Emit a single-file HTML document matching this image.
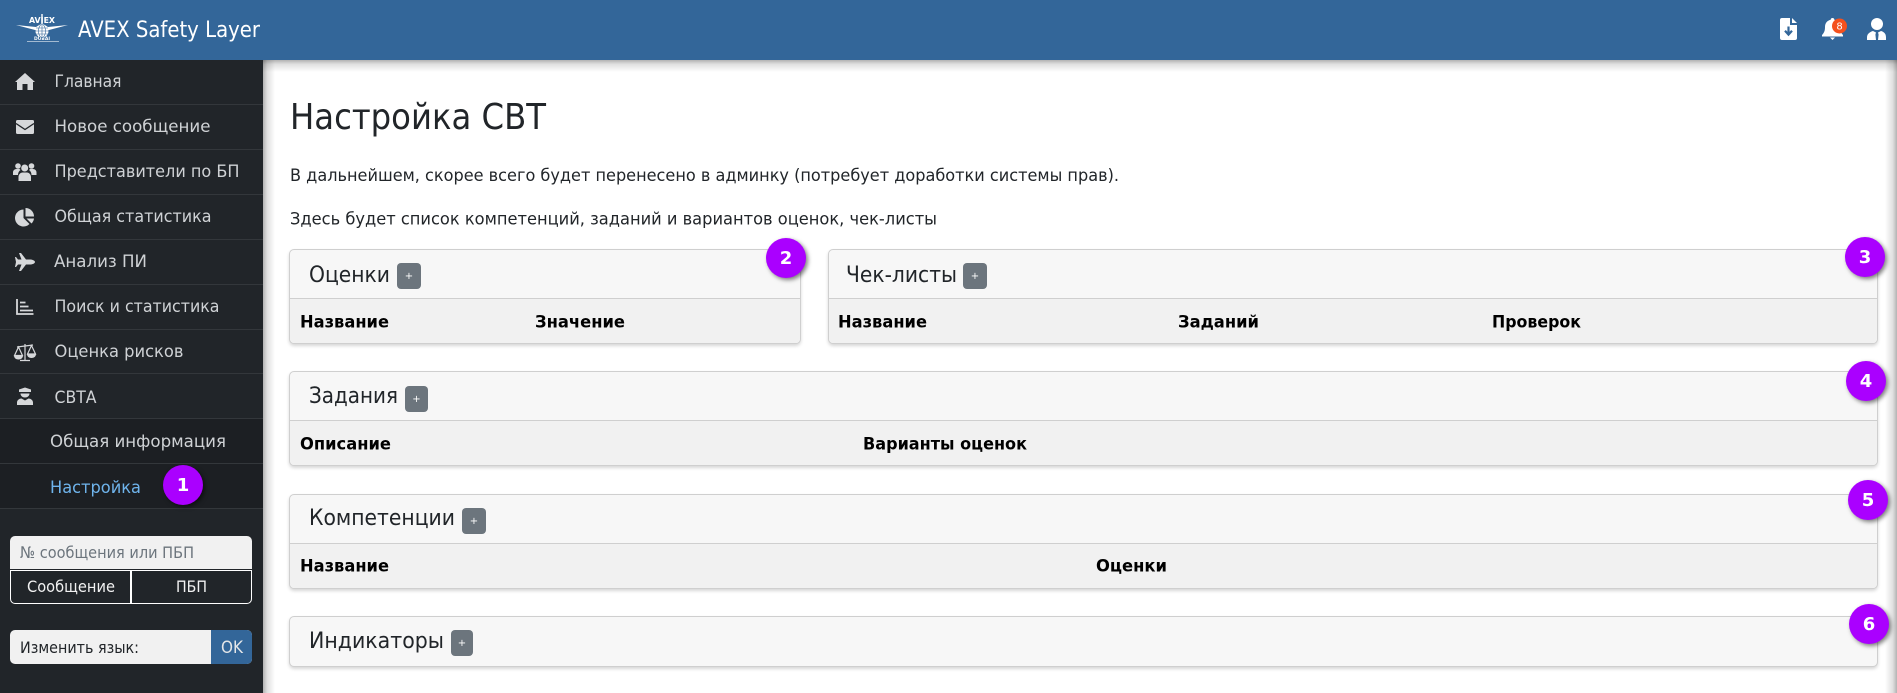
<!DOCTYPE html>
<html lang="ru">
<head>
<meta charset="utf-8">
<title>Настройка СВТ</title>
<style>
html,body{margin:0;padding:0;width:1897px;height:693px;overflow:hidden;background:#fff}
#wrap{position:absolute;left:0;top:0;width:1897px;height:693px;overflow:hidden}
.b{position:absolute;box-sizing:border-box}
#sh-t{left:263px;top:60px;width:1634px;height:12px;background:linear-gradient(to bottom,rgba(0,0,0,.3),rgba(0,0,0,.12) 35%,rgba(0,0,0,0))}
#sh-l{left:263px;top:60px;width:12px;height:633px;background:linear-gradient(to right,rgba(0,0,0,.3),rgba(0,0,0,.12) 35%,rgba(0,0,0,0))}
#sh-r{left:1885px;top:60px;width:12px;height:633px;background:linear-gradient(to left,rgba(0,0,0,.3),rgba(0,0,0,.12) 35%,rgba(0,0,0,0))}
#top{left:0;top:0;width:1897px;height:60px;background:#336699}
#side{left:0;top:60px;width:263px;height:633px;background:#212529}
#sub{left:0;top:358px;width:263px;height:90px;background:#1c1f23;position:absolute}
.ln{position:absolute;left:0;width:263px;height:1px;background:#33373b}
.card{border:1px solid #cfcfcf;border-radius:5px;background:#f7f7f7;box-shadow:0 2px 3px rgba(0,0,0,.16);overflow:hidden}
.th{position:absolute;left:0;right:0;height:46px;top:48px;background:#f1f1f1;border-top:1px solid #cfcfcf}
.pl{background:#6c757d;border-radius:4px;height:26px}
.bd{width:40px;height:40px;border-radius:50%;background:#aa00ff;box-shadow:2px 2px 4px rgba(0,0,0,.5)}
svg{position:absolute;left:0;top:0;display:block}
text{font-family:"DejaVu Sans","Liberation Sans",sans-serif}
.m{font-size:17px;fill:#cfd2d5}
.h{font-size:22px;fill:#212529}
.p{font-size:17px;fill:#212529}
.k{font-size:17px;font-weight:700;fill:#000}
.n{font-size:18px;font-weight:700;fill:#fff;text-anchor:middle}
.s{font-size:10px;fill:#fff;text-anchor:middle}
</style>
</head>
<body>
<div id="wrap">
<div class="b" id="sh-t"></div>
<div class="b" id="sh-l"></div>
<div class="b" id="sh-r"></div>
<div class="b" id="side">
  <div id="sub"></div>
  <div class="ln" style="top:44px"></div><div class="ln" style="top:89px"></div><div class="ln" style="top:134px"></div><div class="ln" style="top:179px"></div><div class="ln" style="top:224px"></div><div class="ln" style="top:269px"></div><div class="ln" style="top:313px"></div><div class="ln" style="top:358px"></div><div class="ln" style="top:403px"></div><div class="ln" style="top:448px"></div>
</div>
<div class="b" id="top"></div>

<div class="b" style="left:10px;top:536px;width:242px;height:33px;background:#f1f1f1;border-radius:5px 5px 0 0"></div>
<div class="b" style="left:10px;top:570px;width:242px;height:34px;border:1px solid #fff;border-top:1px solid #fff;border-radius:0 0 5px 5px"></div>
<div class="b" style="left:130px;top:570px;width:2px;height:34px;background:#fff"></div>
<div class="b" style="left:10px;top:630px;width:242px;height:34px;background:#f1f1f1;border-radius:5px"></div>
<div class="b" style="left:211px;top:630px;width:41px;height:34px;background:#336699;border-radius:0 5px 5px 0"></div>

<div class="b card" style="left:289px;top:249px;width:512px;height:95px"><div class="th"></div></div>
<div class="b card" style="left:828px;top:249px;width:1050px;height:95px"><div class="th"></div></div>
<div class="b card" style="left:289px;top:371px;width:1589px;height:95px"><div class="th"></div></div>
<div class="b card" style="left:289px;top:494px;width:1589px;height:95px"><div class="th"></div></div>
<div class="b card" style="left:289px;top:616px;width:1589px;height:51px"></div>

<div class="b pl" style="left:397px;top:263px;width:24px"></div>
<div class="b pl" style="left:963px;top:263px;width:24px"></div>
<div class="b pl" style="left:405px;top:386px;width:23px"></div>
<div class="b pl" style="left:462px;top:508px;width:24px"></div>
<div class="b pl" style="left:451px;top:630px;width:22px"></div>

<div class="b bd" style="left:163px;top:465px"></div>
<div class="b bd" style="left:766px;top:238px"></div>
<div class="b bd" style="left:1845px;top:237px"></div>
<div class="b bd" style="left:1846px;top:361px"></div>
<div class="b bd" style="left:1848px;top:480px"></div>
<div class="b bd" style="left:1849px;top:604px"></div>

<svg width="1897" height="693" viewBox="0 0 1897 693" xmlns="http://www.w3.org/2000/svg">
  <!-- logo -->
  <g fill="#fff">
    <path d="M16 25 L36 27 L41 24 L43 24 L48 27 L68 25 L49 30 L35 30Z"/>
    <circle cx="42" cy="31" r="6.500"/>
    <path d="M41.300 14 H42.700 V24 H41.300Z"/>
    <text x="29" y="23" font-size="7.500" font-weight="700" textLength="26" lengthAdjust="spacingAndGlyphs">AVIEX</text>
    <text x="34" y="40" font-size="4.500" font-weight="700" textLength="16" lengthAdjust="spacingAndGlyphs">DUBAI</text>
    <rect x="27" y="41" width="32" height="1" opacity=".55"/>
  </g>
  <g stroke="#336699" stroke-width=".6" fill="none"><path d="M35.500 31H48.500M36 28H48M36 34H48M42 24.500V37.500"/><ellipse cx="42" cy="31" rx="3.500" ry="6.500"/></g>
  <text x="78" y="37" font-size="22" fill="#fff" textLength="182" lengthAdjust="spacingAndGlyphs">AVEX Safety Layer</text>

  <!-- top icons -->
  <path fill="#fff" d="M1782 18H1790V25H1797V38a2 2 0 0 1-2 2H1782a2 2 0 0 1-2-2V20a2 2 0 0 1 2-2ZM1792 18L1797 23H1792Z"/>
  <path fill="none" stroke="#336699" stroke-width="2.200" d="M1788.500 26.500V34M1785 30.800L1788.500 34.600L1792 30.800"/>
  <g transform="translate(1 0)">
  <path fill="#fff" d="M1831.500 18a1.800 1.800 0 0 1 1.800 1.800c3.600.8 5.700 3.600 5.700 7.200 0 4 1 5.800 3 8v1.500h-21v-1.500c2-2.200 3-4 3-8 0-3.600 2.100-6.400 5.700-7.200a1.800 1.800 0 0 1 1.800-1.800ZM1829 37.500h5l-2.500 2.500Z"/>
  <circle cx="1838.500" cy="26" r="7.500" fill="#f4511e"/>
  <text x="1838.500" y="29.500" class="s">8</text>
  </g>
  <circle cx="1877" cy="24" r="6" fill="#fff"/>
  <path fill="#fff" d="M1867 40v-2.500c0-3.500 2.500-5.500 6-6.500L1877 33l4-2c3.500 1 5 3 5 6.500v2.500Z"/>
  <path fill="#336699" d="M1876 32.500h2l.6 2-.6 5.500h-2l-.6-5.500Z"/>

  <!-- menu icons -->
  <g fill="#d6d8da">
    <path d="M25 73L35 82H33V90H27.500V84H22.500V90H17V82H15Z"/>
    <path d="M17.500 120H32.500A1.500 1.500 0 0 1 34 121.500V132.500A1.500 1.500 0 0 1 32.500 134H17.500A1.500 1.500 0 0 1 16 132.500V121.500A1.500 1.500 0 0 1 17.500 120Z"/>
    <circle cx="18" cy="166" r="2.800"/><circle cx="31.500" cy="166" r="2.800"/><circle cx="24.700" cy="168" r="3.500"/>
    <path d="M13 175v-2.500c0-2 1.500-3.500 3.500-3.500h3l1 1c-1.500 1-2.500 2.800-2.500 5ZM36.500 175v-2.500c0-2-1.500-3.500-3.500-3.500h-3l-1 1c1.500 1 2.500 2.800 2.500 5ZM18.500 181v-4c0-2.500 2-4.500 4-4.500h4.500c2 0 4 2 4 4.500v4Z"/>
    <path d="M23.500 209.500V218L29.500 224A8.500 8.500 0 1 1 23.500 209.500Z"/>
    <path d="M25.500 208A8.500 8.500 0 0 1 34 216.500H25.500Z"/>
    <path d="M26.500 218.500H34A8.500 8.500 0 0 1 31.500 223.500Z"/>
    <path d="M35 262C35 260.500 32 259.500 30 259.500H26L21 253H19L21.500 259.500H18L16 257H15L16 262L15 267H16L18 264.500H21.500L19 271H21L26 264.500H30C32 264.500 35 263.500 35 262Z"/>
    <path d="M19 389.500L25 387.500L31 389.500V392H19ZM20.500 393.500H29.500C29.500 395.800 27.500 397.500 25 397.500S20.500 395.800 20.500 393.500ZM17 405V402.500C17 400 19.500 398.500 21.500 398.500L25 400.500L28.500 398.500C30.500 398.500 33 400 33 402.500V405Z"/>
  </g>
  <path fill="none" stroke="#212529" stroke-width="1.300" d="M16 123.500L25 129.500L34 123.500"/>
  <path fill="none" stroke="#d6d8da" stroke-width="1.800" d="M17 299V314H33.500M20 302.500H25.500M20 306.500H28.500M20 310.500H33"/>
  <g fill="none" stroke="#d6d8da" stroke-width="1.200"><path d="M25 344V360M20 360.500H30M17 347L33 345"/><path d="M18.500 347L14.500 355.500H22.500ZM31.500 345.500L27.500 354H35.500Z"/></g>
  <path fill="#d6d8da" d="M14 355.500H23C23 358 21 359.500 18.500 359.500S14 358 14 355.500ZM27 354H36C36 356.500 34 358 31.500 358S27 356.500 27 354Z"/>

  <!-- menu text -->
  <text class="m" x="54.500" y="87" textLength="67" lengthAdjust="spacingAndGlyphs">Главная</text>
  <text class="m" x="54.500" y="132" textLength="156" lengthAdjust="spacingAndGlyphs">Новое сообщение</text>
  <text class="m" x="54.500" y="177" textLength="185" lengthAdjust="spacingAndGlyphs">Представители по БП</text>
  <text class="m" x="54.500" y="222" textLength="157" lengthAdjust="spacingAndGlyphs">Общая статистика</text>
  <text class="m" x="54" y="267" textLength="93" lengthAdjust="spacingAndGlyphs">Анализ ПИ</text>
  <text class="m" x="54.500" y="312" textLength="165" lengthAdjust="spacingAndGlyphs">Поиск и статистика</text>
  <text class="m" x="54.500" y="357" textLength="129" lengthAdjust="spacingAndGlyphs">Оценка рисков</text>
  <text class="m" x="54.500" y="403" textLength="42" lengthAdjust="spacingAndGlyphs">СВТА</text>
  <text class="m" x="50" y="447" textLength="176" lengthAdjust="spacingAndGlyphs">Общая информация</text>
  <text class="m" x="50" y="493" textLength="91" lengthAdjust="spacingAndGlyphs" style="fill:#6fb4ec">Настройка</text>

  <!-- sidebar forms -->
  <text x="20" y="558" font-size="16" fill="#6c757d" textLength="174" lengthAdjust="spacingAndGlyphs">№ сообщения или ПБП</text>
  <text x="27" y="592" font-size="16" fill="#f1f1f1" textLength="88" lengthAdjust="spacingAndGlyphs">Сообщение</text>
  <text x="176" y="592" font-size="16" fill="#f1f1f1" textLength="31" lengthAdjust="spacingAndGlyphs">ПБП</text>
  <text x="20" y="653" font-size="16" fill="#212529" textLength="119" lengthAdjust="spacingAndGlyphs">Изменить язык:</text>
  <text x="221" y="653" font-size="17" fill="#e4e6e8" textLength="22" lengthAdjust="spacingAndGlyphs">OK</text>

  <!-- main text -->
  <text x="290" y="129" font-size="36" fill="#212529" textLength="256" lengthAdjust="spacingAndGlyphs">Настройка СВТ</text>
  <text class="p" x="290" y="181" textLength="829" lengthAdjust="spacingAndGlyphs">В дальнейшем, скорее всего будет перенесено в админку (потребует доработки системы прав).</text>
  <text class="p" x="290" y="224.500" textLength="647" lengthAdjust="spacingAndGlyphs">Здесь будет список компетенций, заданий и вариантов оценок, чек-листы</text>

  <text class="h" x="309" y="282" textLength="81" lengthAdjust="spacingAndGlyphs">Оценки</text>
  <text class="h" x="846" y="282" textLength="111" lengthAdjust="spacingAndGlyphs">Чек-листы</text>
  <text class="h" x="309" y="403" textLength="89" lengthAdjust="spacingAndGlyphs">Задания</text>
  <text class="h" x="309" y="525" textLength="146" lengthAdjust="spacingAndGlyphs">Компетенции</text>
  <text class="h" x="309" y="648" textLength="135" lengthAdjust="spacingAndGlyphs">Индикаторы</text>

  <text class="s" x="409" y="279">+</text>
  <text class="s" x="975" y="279">+</text>
  <text class="s" x="416.500" y="402">+</text>
  <text class="s" x="474" y="524">+</text>
  <text class="s" x="462" y="646">+</text>

  <text class="k" x="300" y="327.500" textLength="89" lengthAdjust="spacingAndGlyphs">Название</text>
  <text class="k" x="535" y="327.500" textLength="90" lengthAdjust="spacingAndGlyphs">Значение</text>
  <text class="k" x="838" y="327.500" textLength="89" lengthAdjust="spacingAndGlyphs">Название</text>
  <text class="k" x="1178" y="327.500" textLength="81" lengthAdjust="spacingAndGlyphs">Заданий</text>
  <text class="k" x="1492" y="327.500" textLength="89" lengthAdjust="spacingAndGlyphs">Проверок</text>
  <text class="k" x="300" y="449.500" textLength="91" lengthAdjust="spacingAndGlyphs">Описание</text>
  <text class="k" x="863" y="449.500" textLength="164" lengthAdjust="spacingAndGlyphs">Варианты оценок</text>
  <text class="k" x="300" y="571.500" textLength="89" lengthAdjust="spacingAndGlyphs">Название</text>
  <text class="k" x="1096" y="571.500" textLength="71" lengthAdjust="spacingAndGlyphs">Оценки</text>

  <text class="n" x="183" y="491">1</text>
  <text class="n" x="786" y="264">2</text>
  <text class="n" x="1865" y="263">3</text>
  <text class="n" x="1866" y="387">4</text>
  <text class="n" x="1868" y="506">5</text>
  <text class="n" x="1869" y="630">6</text>
</svg>
</div>
</body>
</html>
